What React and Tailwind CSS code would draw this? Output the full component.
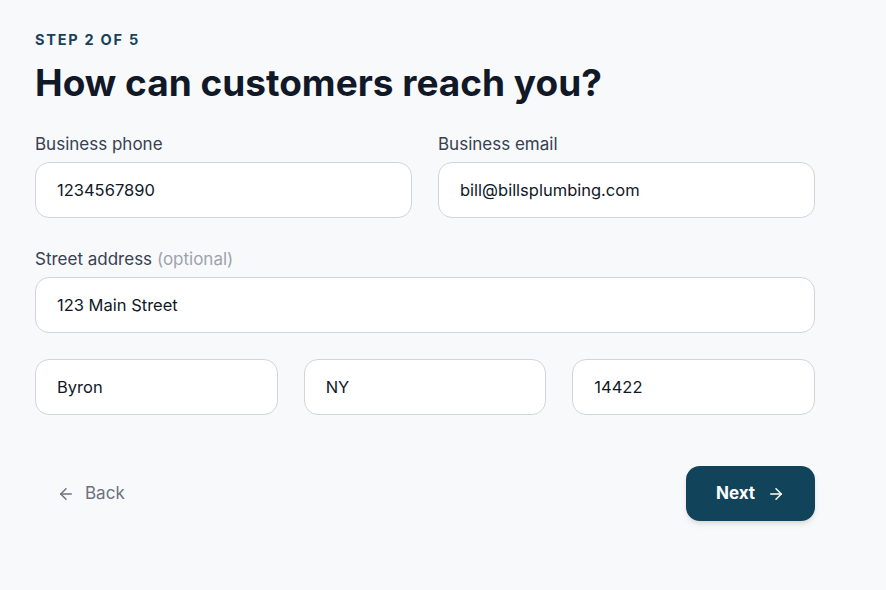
import React from 'react';
import { ArrowLeft, ArrowRight } from 'lucide-react';

const Field = ({ label, optional, value, className = '' }) => (
  <div className={`flex flex-col gap-[6px] ${className}`}>
    {label && (
      <label className="text-[17px] leading-6 text-[#374151]">
        {label}
        {optional && <span className="text-[#9ca3af]"> (optional)</span>}
      </label>
    )}
    <input
      className="h-14 w-full rounded-[14px] border border-[#d1d5db] bg-white px-[21px] text-[16.5px] text-[#111827] outline-none"
      defaultValue={value}
    />
  </div>
);

const App = () => {
  return (
    <div className="min-h-[590px] bg-[#f8f9fb] font-['Inter',sans-serif]">
      <div className="w-[780px] ml-[35px] pt-[30px] flex flex-col">
        <p className="text-[14.5px] leading-5 font-bold tracking-[0.12em] text-[#16425b]">STEP 2 OF 5</p>
        <h1 className="mt-[11px] text-[37px] leading-[44px] font-bold text-[#111827]">
          How can customers reach you?
        </h1>

        <div className="mt-[27px] grid grid-cols-2 gap-[26px]">
          <Field label="Business phone" value="1234567890" />
          <Field label="Business email" value="bill@billsplumbing.com" />
        </div>

        <Field className="mt-[29px]" label="Street address" optional value="123 Main Street" />

        <div className="mt-[26px] grid grid-cols-3 gap-[26px]">
          <Field value="Byron" />
          <Field value="NY" />
          <Field value="14422" />
        </div>

        <div className="mt-[51px] flex items-center justify-between">
          <button className="flex items-center gap-[10px] px-[22px] h-[55px] text-[17px] text-[#6b7280]">
            <ArrowLeft size={18} strokeWidth={2} />
            Back
          </button>
          <button className="flex items-center gap-3 h-[55px] px-[30px] rounded-[14px] bg-[#11445b] text-white text-[17px] font-bold shadow-md">
            Next
            <ArrowRight size={18} strokeWidth={2} />
          </button>
        </div>
      </div>
    </div>
  );
};

export default App;
